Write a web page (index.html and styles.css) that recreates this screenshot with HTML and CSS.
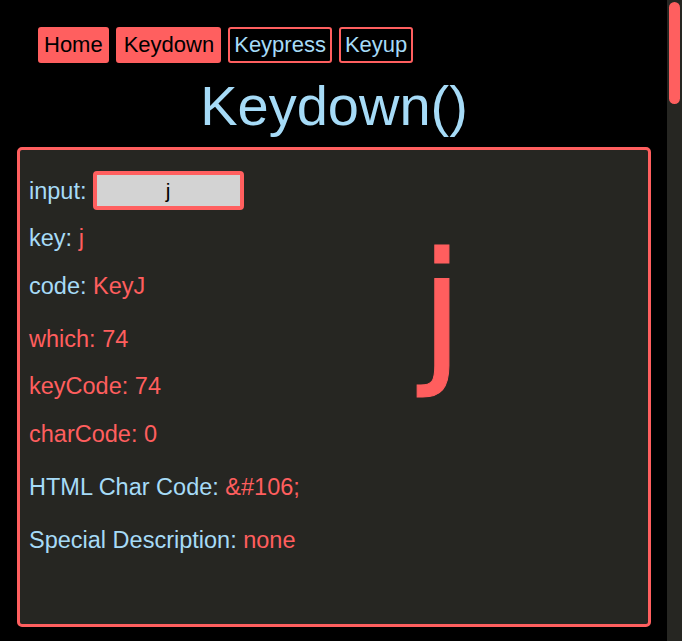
FILE: index.html
```html
<!DOCTYPE html>
<html lang="en">
<head>
<meta charset="utf-8">
<title>Keydown()</title>
<link rel="stylesheet" href="styles.css">
</head>
<body>
<div class="page">
  <nav class="nav">
    <a class="btn btn-active" href="#">Home</a>
    <a class="btn btn-active btn-wide" href="#">Keydown</a>
    <a class="btn" href="#">Keypress</a>
    <a class="btn" href="#">Keyup</a>
  </nav>
  <h1 class="title">Keydown()</h1>
  <section class="panel">
    <div class="fields">
      <div class="row row-input">
        <span class="label">input:</span>
        <input class="key-input" type="text" value="j">
      </div>
      <div class="row row-first"><span class="label">key:</span> <span class="value">j</span></div>
      <div class="row"><span class="label">code:</span> <span class="value">KeyJ</span></div>
      <div class="row row-gap deprecated">which: 74</div>
      <div class="row row-tight deprecated">keyCode: 74</div>
      <div class="row deprecated">charCode: 0</div>
      <div class="row row-gap"><span class="label">HTML Char Code:</span> <span class="value">&amp;#106;</span></div>
      <div class="row row-gap"><span class="label">Special Description:</span> <span class="value">none</span></div>
    </div>
    <div class="glyph">j</div>
  </section>
</div>
<div class="scrollbar"><div class="scrollbar-thumb"></div></div>
</body>
</html>
```
FILE: styles.css
```css
html {
  background: #000;
}
body {
  margin: 0;
  background: #000;
  font-family: "Liberation Sans", Arial, sans-serif;
  color: #a6dbf7;
  overflow: hidden;
}
.page {
  margin-right: 15px;
  padding: 27px 16px 0 17px;
}
.nav {
  display: flex;
  gap: 7px;
  padding-left: 21px;
}
.btn {
  display: block;
  font-size: 22px;
  line-height: 26px;
  padding: 3px 4px;
  border: 2px solid #ff5f5f;
  border-radius: 3px;
  color: #a6dbf7;
  text-decoration: none;
  background: #000;
}
.btn-wide {
  padding: 3px 5px 3px 6px;
}
.btn-active {
  background: #ff5f5f;
  color: #000;
}
.title {
  margin: 10px 0 9px;
  text-align: center;
  font-size: 56px;
  font-weight: normal;
  line-height: normal;
  color: #a6dbf7;
}
.panel {
  display: grid;
  grid-template-columns: 400px auto;
  align-items: start;
  border: 3px solid #ff5f5f;
  border-radius: 5px;
  background: #262622;
}
.fields {
  padding: 21px 9px 71px;
  font-size: 23.5px;
}
.row {
  line-height: 26px;
  margin-top: 22px;
  white-space: nowrap;
}
.row-input {
  margin-top: 0;
  display: flex;
  align-items: center;
  gap: 6px;
}
.row-first {
  margin-top: 15px;
}
.row-tight {
  margin-top: 21px;
}
.row-gap {
  margin-top: 27px;
}
.label {
  color: #a6dbf7;
}
.value,
.deprecated {
  color: #ff5e5e;
}
.key-input {
  box-sizing: border-box;
  width: 151px;
  height: 39px;
  border: 4px solid #ff5f5f;
  border-radius: 4px;
  background: #d3d3d3;
  text-align: center;
  font-family: "Liberation Sans", Arial, sans-serif;
  font-size: 21px;
  color: #000;
  padding: 0;
  outline: none;
}
.glyph {
  margin-top: 81px;
  font-family: "DejaVu Sans", sans-serif;
  font-size: 157px;
  line-height: 1;
  color: #ff5e5e;
  -webkit-text-stroke: 1px #ff5e5e;
}
.scrollbar {
  position: fixed;
  top: 0;
  right: 0;
  width: 15px;
  height: 100%;
  background: #262622;
}
.scrollbar-thumb {
  position: absolute;
  top: 2px;
  left: 2px;
  width: 11px;
  height: 102px;
  border-radius: 6px;
  background: #ff5f5f;
}
```
